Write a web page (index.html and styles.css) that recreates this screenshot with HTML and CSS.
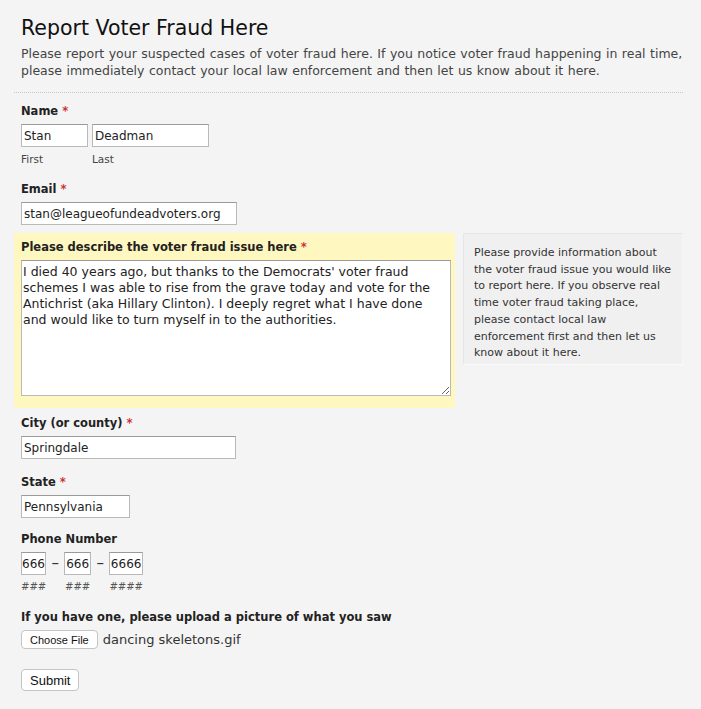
FILE: index.html
```html
<!DOCTYPE html>
<html>
<head>
<meta charset="utf-8">
<link rel="stylesheet" href="styles.css">
</head>
<body>
<div class="page">
  <header class="head">
    <h1 class="title">Report Voter Fraud Here</h1>
    <p class="intro">Please report your suspected cases of voter fraud here. If you notice voter fraud happening in real time, please immediately contact your local law enforcement and then let us know about it here.</p>
  </header>
  <form class="form">
    <div class="field">
      <div class="label">Name <span class="req">*</span></div>
      <div class="name-row">
        <div class="sub">
          <input class="input w-first" type="text" value="Stan">
          <span class="sublabel">First</span>
        </div>
        <div class="sub">
          <input class="input w-last" type="text" value="Deadman">
          <span class="sublabel">Last</span>
        </div>
      </div>
    </div>
    <div class="field field-tight">
      <div class="label">Email <span class="req">*</span></div>
      <input class="input w-email" type="text" value="stan@leagueofundeadvoters.org">
    </div>
    <div class="row-desc">
      <div class="field highlight">
        <div class="label">Please describe the voter fraud issue here <span class="req">*</span></div>
        <textarea class="textarea">I died 40 years ago, but thanks to the Democrats' voter fraud schemes I was able to rise from the grave today and vote for the Antichrist (aka Hillary Clinton). I deeply regret what I have done and would like to turn myself in to the authorities.</textarea>
      </div>
      <div class="help">Please provide information about the voter fraud issue you would like to report here. If you observe real time voter fraud taking place, please contact local law enforcement first and then let us know about it here.</div>
    </div>
    <div class="field">
      <div class="label">City (or county) <span class="req">*</span></div>
      <input class="input w-city" type="text" value="Springdale">
    </div>
    <div class="field">
      <div class="label">State <span class="req">*</span></div>
      <input class="input w-state" type="text" value="Pennsylvania">
    </div>
    <div class="field field-phone">
      <div class="label">Phone Number</div>
      <div class="phone-row">
        <div class="sub">
          <input class="input phone w-p3" type="text" value="666">
          <span class="hint">###</span>
        </div>
        <span class="dash">–</span>
        <div class="sub">
          <input class="input phone w-p3b" type="text" value="666">
          <span class="hint">###</span>
        </div>
        <span class="dash">–</span>
        <div class="sub">
          <input class="input phone w-p4" type="text" value="6666">
          <span class="hint">####</span>
        </div>
      </div>
    </div>
    <div class="field">
      <div class="label">If you have one, please upload a picture of what you saw</div>
      <div class="file-row">
        <button type="button" class="btn btn-file">Choose File</button>
        <span class="filename">dancing skeletons.gif</span>
      </div>
    </div>
    <div class="submit-row">
      <button type="button" class="btn btn-submit">Submit</button>
    </div>
  </form>
</div>
</body>
</html>
```
FILE: styles.css
```css
html, body {
  margin: 0;
  padding: 0;
  background: #f4f4f4;
}
body {
  font-family: "DejaVu Sans", Verdana, sans-serif;
  color: #222;
}
.page {
  padding: 0 18px 0 14px;
}
.head {
  padding: 14px 0 13px 7px;
  border-bottom: 1px dotted #c8c8c8;
}
.title {
  margin: 0;
  font-size: 20.5px;
  font-weight: normal;
  color: #111;
  line-height: 28px;
}
.intro {
  margin: 3px 0 0;
  font-size: 12.5px;
  word-spacing: 0.5px;
  line-height: 17px;
  color: #444;
}
.form {
  padding-top: 7px;
}
.field {
  padding: 3px 7px 12px;
}
.field-tight {
  padding-bottom: 8px;
}
.field-phone {
  padding-top: 1px;
  padding-bottom: 13px;
}
.label {
  font-size: 11.5px;
  font-weight: bold;
  color: #222;
  line-height: 17px;
  margin-bottom: 4px;
}
.req {
  color: #c33;
}
.input {
  box-sizing: border-box;
  height: 23px;
  border: 1px solid #b9b9b9;
  border-top-color: #9a9a9a;
  background: #fff;
  font-family: inherit;
  font-size: 12px;
  color: #222;
  padding: 0 2px;
  margin: 0;
  display: block;
}
.w-first { width: 67px; }
.w-last { width: 117px; }
.w-email { width: 216px; }
.w-city { width: 215px; }
.w-state { width: 109px; }
.phone {
  padding: 0;
  text-align: center;
  font-size: 12px;
}
.w-p3 { width: 25px; }
.w-p3b { width: 27px; }
.w-p4 { width: 34px; }
.name-row, .phone-row {
  display: flex;
  align-items: flex-start;
}
.name-row {
  gap: 4px;
}
.sub {
  display: flex;
  flex-direction: column;
}
.sublabel {
  font-size: 10.5px;
  color: #444;
  margin-top: 6px;
  line-height: 13px;
}
.hint {
  font-size: 10px;
  color: #555;
  font-style: italic;
  margin-top: 5px;
  line-height: 13px;
  text-align: center;
}
.dash {
  width: 18px;
  text-align: center;
  font-size: 15px;
  line-height: 23px;
  color: #333;
}
.row-desc {
  display: flex;
  align-items: flex-start;
  gap: 8px;
  margin: 0 0 4px;
}
.highlight {
  background: #fff7c0;
  width: 429px;
  flex: none;
  padding: 6px 5px 12px 7px;
  margin: 0;
}
.textarea {
  display: block;
  box-sizing: border-box;
  width: 430px;
  height: 136px;
  border: 1px solid #b9b9b9;
  border-top-color: #9a9a9a;
  background: #fff;
  font-family: inherit;
  font-size: 12.5px;
  line-height: 16px;
  color: #222;
  padding: 3px 1px 2px;
  margin: 0;
  resize: both;
}
.help {
  flex: 1;
  box-sizing: border-box;
  height: 132px;
  background: #f0f0f0;
  border: 1px solid #e6e6e6;
  border-right-color: #f7f7f7;
  border-bottom-color: #fafafa;
  padding: 11px 10px 0 10px;
  font-size: 11px;
  line-height: 16.7px;
  color: #333;
}
.file-row {
  display: flex;
  align-items: center;
  gap: 5px;
}
.btn {
  font-family: "Liberation Sans", Arial, sans-serif;
  background: #fff;
  border: 1px solid #c4c4c4;
  border-radius: 4px;
  color: #111;
  margin: 0;
  cursor: default;
}
.btn-file {
  font-size: 11px;
  height: 19px;
  padding: 0 8px;
}
.filename {
  font-size: 13px;
  color: #333;
}
.submit-row {
  padding: 8px 7px 0;
}
.btn-submit {
  font-size: 13px;
  height: 22px;
  padding: 0 8px;
}
```
